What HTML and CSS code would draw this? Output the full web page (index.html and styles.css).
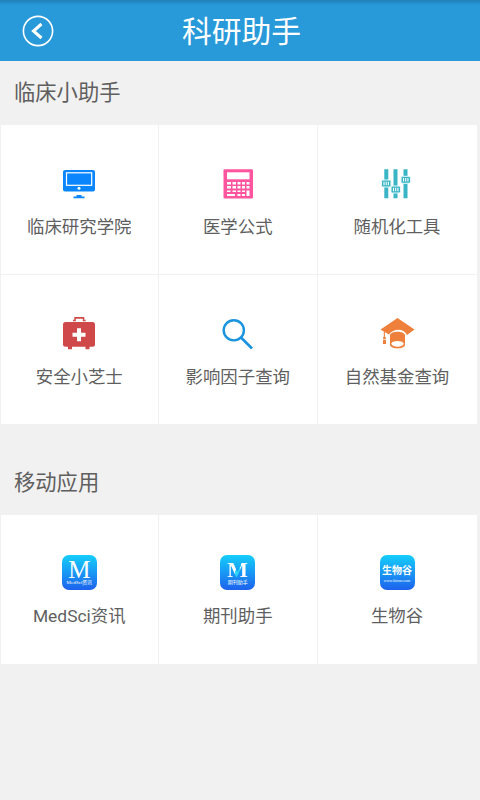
FILE: index.html
```html
<!DOCTYPE html>
<html lang="zh-CN">
<head>
<meta charset="utf-8">
<title>科研助手</title>
<link rel="stylesheet" href="styles.css">
</head>
<body>
<header class="bar">
  <svg class="back" viewBox="0 0 32 32"><circle cx="16" cy="16" r="14.600" fill="none" stroke="#fff" stroke-width="1.600"/><path d="M19.500 9 11.500 16l8 7" fill="none" stroke="#fff" stroke-width="3"/></svg>
  <h1>科研助手</h1>
</header>
<main>
  <h2>临床小助手</h2>
  <section class="grid">
    <div class="cell">
      <svg class="icon" viewBox="11 11 36 36"><rect x="13" y="15" width="32" height="21.500" rx="2" fill="#0b85fb"/><rect x="16.500" y="17.800" width="25.200" height="12.500" fill="none" stroke="#fff" stroke-width="1.200"/><circle cx="29" cy="33.300" r="1.500" fill="#fff"/><path d="M26.500 40h5v1.600h3V43.200H23.500v-1.600h3z" fill="#0b85fb"/></svg>
      <p>临床研究学院</p>
    </div>
    <div class="cell">
      <svg class="icon" viewBox="10 11 36 36"><rect x="13.500" y="14.300" width="29.500" height="29.200" rx="1" fill="#ff559e"/><g fill="#fff"><path d="M17 17.300h22.500v7H17z"/><path d="M17 27h4v2.500h-4zM22.500 27h3.500v2.500h-3.500zM27.500 27h3v2.500h-3zM32 27h3v2.500h-3zM36.500 27h3v2.500h-3zM17 31h4v2.500h-4zM22.500 31h3.500v2.500h-3.500zM27.500 31h3v2.500h-3zM32 31h3v2.500h-3zM36.500 31h3v2.500h-3zM17 35.500h3.500v1.500H17zM22.500 35.500h3.500v1.500h-3.500zM27.500 35.500h3v1.500h-3zM32 35.500h3v1.500h-3zM17 39h8v2h-8zM27.500 39h3v2h-3zM32 39h3v2h-3zM36.500 35.500h3V41h-3z"/></g></svg>
      <p>医学公式</p>
    </div>
    <div class="cell">
      <svg class="icon" viewBox="9.500 11 36 36"><path d="M14.800 14.300h4v29h-4zM24 14.300h4v29h-4zM34 14.300h4v29h-4z" fill="#39b5c6"/><g fill="#39b5c6" stroke="#e8fafb" stroke-width="1"><rect x="12" y="25" width="9.500" height="7" rx="1.500"/><rect x="21.500" y="31" width="9.500" height="7" rx="1.500"/><rect x="31.500" y="21.300" width="9.500" height="7" rx="1.500"/></g><path d="M14.500 26.800v3.500M16.700 26.800v3.500M18.900 26.800v3.500M24 32.800v3.500M26.200 32.800v3.500M28.400 32.800v3.500M34 23v3.500M36.200 23v3.500M38.400 23v3.500" stroke="#fff" stroke-width="1.100"/></svg>
      <p>随机化工具</p>
    </div>
    <div class="cell">
      <svg class="icon" viewBox="11 11 36 36"><g fill="#cf494a"><path d="M24.300 12h10v2.700h1.300v1.500H32.800v-2.500h-7v2.500H23v-1.500h1.300z"/><rect x="13" y="17" width="32" height="24.700" rx="2.500"/><path d="M18 41h4v3.300h-4zM35.500 41h4v3.300h-4z"/></g><path d="M27 23.300h4v4.500h4.500v4H31v4.500h-4v-4.500h-4.500v-4H27z" fill="#fff"/></svg>
      <p>安全小芝士</p>
    </div>
    <div class="cell">
      <svg class="icon" viewBox="10 11 36 36"><circle cx="23.800" cy="25.300" r="10.100" fill="none" stroke="#1a94df" stroke-width="2.400"/><path d="m31 32.500 11 11" stroke="#1a94df" stroke-width="2.700"/></svg>
      <p>影响因子查询</p>
    </div>
    <div class="cell">
      <svg class="icon" viewBox="9.500 11 36 36"><g fill="#ee803c"><path d="M28 13 45 24.500 37.500 30C34.500 23.500 24.500 23 19.500 29.500L16 27.500 11 24.500z"/><path d="M20.500 30C21.500 25.500 34.500 25.500 35.500 30V40C34.500 44.500 21.500 44.500 20.500 40z"/><path d="M14.300 26h1.100v6h.8l.4 7h-3.200l.3-7h.6z"/></g><ellipse cx="28" cy="38.800" rx="6.200" ry="2.900" fill="#fff"/><path d="M13 34.500h4" stroke="#fff" stroke-width=".7"/></svg>
      <p>自然基金查询</p>
    </div>
  </section>
  <h2 class="second">移动应用</h2>
  <section class="grid">
    <div class="cell">
      <div class="app"><b>M</b><small>MedSci资讯</small></div>
      <p>MedSci资讯</p>
    </div>
    <div class="cell">
      <div class="app journal"><b>M</b><small>期刊助手</small></div>
      <p>期刊助手</p>
    </div>
    <div class="cell">
      <div class="app bio"><b>生物谷</b><small>www.bioon.com</small></div>
      <p>生物谷</p>
    </div>
  </section>
</main>
</body>
</html>
```
FILE: styles.css
```css
* { box-sizing: border-box; }
body {
  margin: 0;
  min-height: 800px;
  background: #f1f1f1;
  color: #5f5f5f;
  font-family: Roboto, "Noto Sans CJK SC", sans-serif;
}
h1, h2, p { margin: 0; font-weight: 400; }
.bar {
  display: grid;
  grid-template-columns: 60px 1fr 57px;
  align-items: center;
  height: 61px;
  background: linear-gradient(#2080b5, #2899d9 5px);
  color: #fff;
}
.back { width: 32px; height: 32px; margin-left: 21.500px; }
h1 { padding-top: 2px; font-size: 29.800px; line-height: 60px; text-align: center; }
h2 {
  height: 64px;
  padding-left: 14px;
  font-size: 21.300px;
  line-height: 63px;
}
.second { height: 91px; padding-top: 27px; }
.grid {
  display: grid;
  grid-template-columns: 157px 158px 159px;
  grid-auto-rows: 149px;
  gap: 1px;
  padding-left: 1px;
}
.cell {
  display: flex;
  flex-direction: column;
  align-items: center;
  padding: 41px .5px 0 0;
  background: #fff;
}
.cell:nth-child(3n) { padding-right: 1px; }
.icon { width: 36px; height: 36px; flex: none; }
.cell p { margin-top: 12px; font-size: 17.400px; line-height: 26px; white-space: nowrap; }
.app {
  display: flex;
  flex-direction: column;
  align-items: center;
  width: 35px;
  height: 35px;
  margin: -1px 0 1px;
  overflow: hidden;
  border-radius: 7px;
  background: linear-gradient(#15cefb, #1d62ed);
  color: #fff;
  white-space: nowrap;
}
.app b {
  margin-top: 5px;
  font: 400 25px/20px "Liberation Serif", serif;
  height: 19px;
}
.app small {
  margin-top: 1px;
  font: 5px/6px "Liberation Serif", "Noto Sans CJK SC", serif;
}
.journal b {
  font-weight: 700;
  font-size: 22px;
  background: linear-gradient(100deg, #fff 42%, #30d8fa 43%, #30d8fa 60%, #fff 61%);
  -webkit-background-clip: text;
  background-clip: text;
  color: transparent;
}
.bio b {
  margin-top: 8px;
  height: 14px;
  font: 700 10px/14px "Noto Sans CJK SC", sans-serif;
}
.bio small { font-size: 4px; line-height: 6px; }
```
